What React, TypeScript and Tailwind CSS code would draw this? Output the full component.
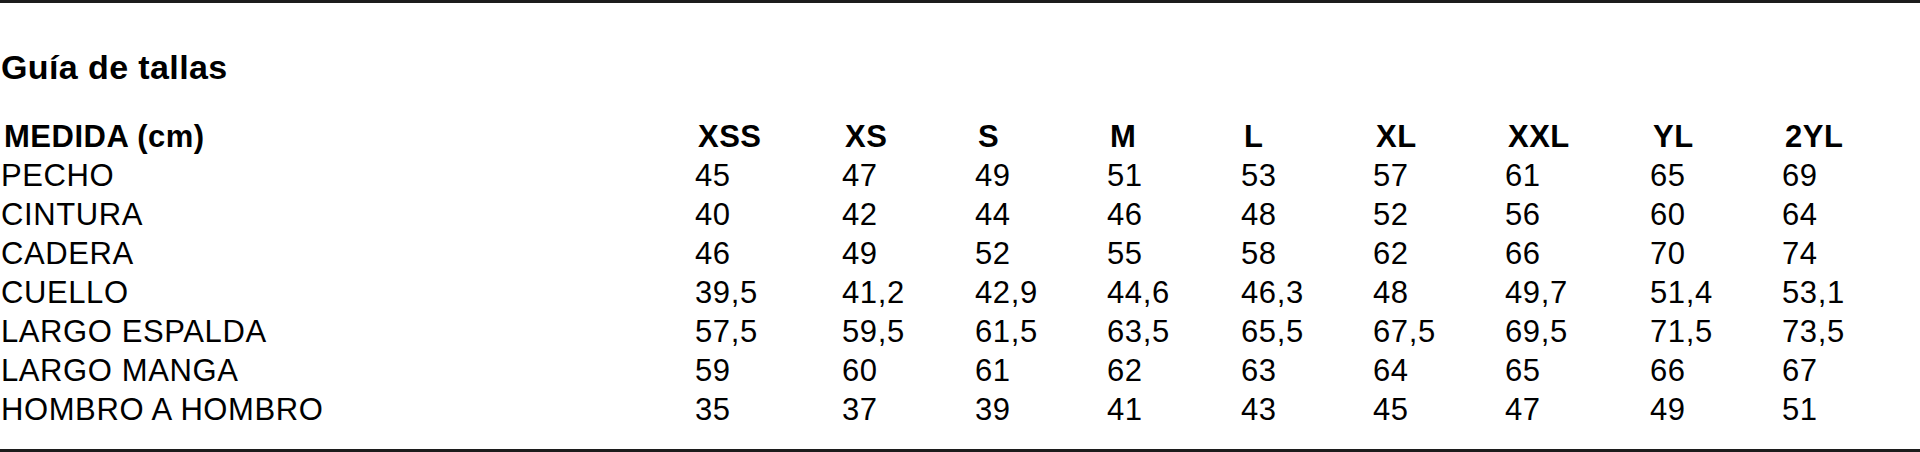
// Size guide table
const sizes = ['XSS', 'XS', 'S', 'M', 'L', 'XL', 'XXL', 'YL', '2YL'];

const rows: [string, string[]][] = [
  ['PECHO', ['45', '47', '49', '51', '53', '57', '61', '65', '69']],
  ['CINTURA', ['40', '42', '44', '46', '48', '52', '56', '60', '64']],
  ['CADERA', ['46', '49', '52', '55', '58', '62', '66', '70', '74']],
  ['CUELLO', ['39,5', '41,2', '42,9', '44,6', '46,3', '48', '49,7', '51,4', '53,1']],
  ['LARGO ESPALDA', ['57,5', '59,5', '61,5', '63,5', '65,5', '67,5', '69,5', '71,5', '73,5']],
  ['LARGO MANGA', ['59', '60', '61', '62', '63', '64', '65', '66', '67']],
  ['HOMBRO A HOMBRO', ['35', '37', '39', '41', '43', '45', '47', '49', '51']],
];

const gridCols =
  'grid grid-cols-[692px_147px_133px_132px_134px_132px_132px_145px_132px_1fr]';

const App = () => {
  return (
    <div className="w-[1920px] h-[452px] bg-white text-black font-['Liberation_Sans',Arial,sans-serif]">
      <div className="h-full border-t-[3px] border-b-[3px] border-[#1c1c1c] pt-[44px]">
        <h2 className="text-[34px] leading-[40px] tracking-[0.4px] font-bold pl-[1px]">Guía de tallas</h2>

        <div className="mt-[30px] text-[31px] leading-[39px] tracking-[0.6px]">
          {/* Header row */}
          <div className={`${gridCols} font-bold tracking-[0.5px]`}>
            <div className="pl-[4px]">MEDIDA (cm)</div>
            {sizes.map(size => (
              <div key={size} className="pl-[6px]">{size}</div>
            ))}
          </div>

          {/* Measurements */}
          {rows.map(([label, values]) => (
            <div key={label} className={gridCols}>
              <div className="pl-[1px]">{label}</div>
              {values.map((v, i) => (
                <div key={i} className="pl-[3px]">{v}</div>
              ))}
            </div>
          ))}
        </div>
      </div>
    </div>
  );
};

export default App;
